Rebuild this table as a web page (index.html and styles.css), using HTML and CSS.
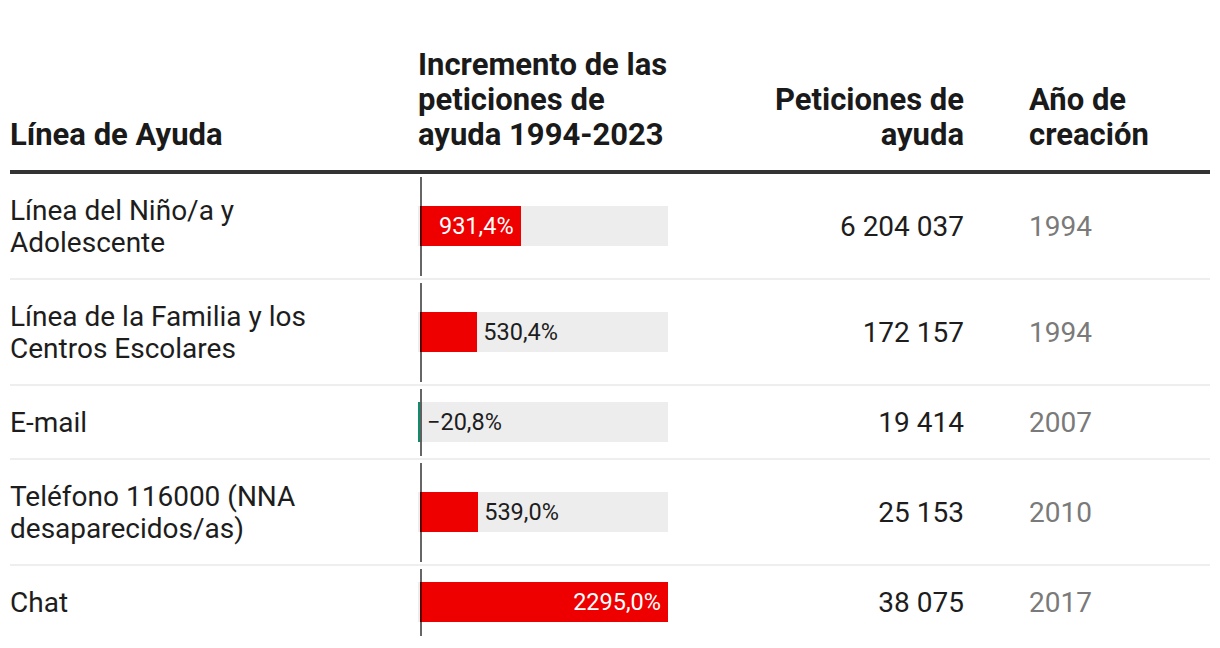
FILE: index.html
```html
<!DOCTYPE html>
<html lang="es">
<head>
<meta charset="utf-8">
<title>Líneas de Ayuda</title>
<link rel="stylesheet" href="styles.css">
</head>
<body>
<div class="table">
  <div class="row head">
    <div class="cell c1">Línea de Ayuda</div>
    <div class="cell c2">Incremento de las<br>peticiones de<br>ayuda 1994-2023</div>
    <div class="cell c3">Peticiones de<br>ayuda</div>
    <div class="cell c4">Año de<br>creación</div>
  </div>
  <div class="row">
    <div class="cell c1"><span class="name">Línea del Niño/a y Adolescente</span></div>
    <div class="cell c2 barcell"><div class="track"><div class="fill pos" style="width:100.6px"><span class="lbl in">931,4%</span></div></div></div>
    <div class="cell c3">6 204 037</div>
    <div class="cell c4">1994</div>
  </div>
  <div class="row">
    <div class="cell c1"><span class="name">Línea de la Familia y los Centros Escolares</span></div>
    <div class="cell c2 barcell"><div class="track"><div class="fill pos" style="width:57.3px"></div><span class="lbl out">530,4%</span></div></div>
    <div class="cell c3">172 157</div>
    <div class="cell c4">1994</div>
  </div>
  <div class="row">
    <div class="cell c1"><span class="name">E-mail</span></div>
    <div class="cell c2 barcell"><div class="track"><div class="fill neg"></div><span class="lbl out neglbl">−20,8%</span></div></div>
    <div class="cell c3">19 414</div>
    <div class="cell c4">2007</div>
  </div>
  <div class="row">
    <div class="cell c1"><span class="name">Teléfono 116000 (NNA desaparecidos/as)</span></div>
    <div class="cell c2 barcell"><div class="track"><div class="fill pos" style="width:58.2px"></div><span class="lbl out">539,0%</span></div></div>
    <div class="cell c3">25 153</div>
    <div class="cell c4">2010</div>
  </div>
  <div class="row">
    <div class="cell c1"><span class="name">Chat</span></div>
    <div class="cell c2 barcell"><div class="track"><div class="fill pos" style="width:248px"><span class="lbl in">2295,0%</span></div></div></div>
    <div class="cell c3">38 075</div>
    <div class="cell c4">2017</div>
  </div>
</div>
</body>
</html>
```
FILE: styles.css
```css
html, body {
  margin: 0;
  padding: 0;
  background: #ffffff;
}
body {
  font-family: Roboto, "Liberation Sans", sans-serif;
  color: #1d1d1d;
}
.table {
  padding: 47px 10px 0 10px;
  width: 1200px;
}
.row {
  display: grid;
  grid-template-columns: 408px 250px 296px 1fr;
  align-items: center;
  border-bottom: 2px solid #eeeeee;
  font-size: 28px;
  line-height: 32px;
}
.row:last-child {
  border-bottom: none;
}
.row.head {
  align-items: end;
  border-bottom: 4px solid #333333;
  font-weight: 700;
  font-size: 31px;
  line-height: 35px;
  color: #1a1a1a;
}
.cell {
  padding-top: 21px;
  padding-bottom: 19px;
}
.head .cell {
  padding-top: 0;
  padding-bottom: 18px;
}
.name {
  display: block;
  max-width: 340px;
}
.c3 {
  text-align: right;
}
.c4 {
  padding-left: 65px;
}
.row:not(.head) .c4 {
  color: #7a7a7a;
}
.barcell {
  position: relative;
  align-self: stretch;
  display: flex;
  align-items: center;
}
.row .barcell {
  padding-top: 0;
  padding-bottom: 0;
}
.barcell::after {
  content: "";
  position: absolute;
  left: 2px;
  top: 3px;
  bottom: 2px;
  width: 2px;
  background: rgba(0, 0, 0, 0.6);
}
.track {
  display: flex;
  align-items: center;
  width: 248px;
  height: 40px;
  padding-left: 2px;
  background: #ededed;
}
.fill {
  height: 40px;
  display: flex;
  align-items: center;
  justify-content: flex-end;
  flex: none;
}
.fill.pos {
  background: #ee0000;
}
.fill.neg {
  width: 2px;
  margin-left: -2px;
  background: #138a6b;
}
.lbl {
  font-size: 23.5px;
  line-height: 40px;
  white-space: nowrap;
}
.lbl.in {
  color: #ffffff;
  padding-right: 7px;
}
.lbl.out {
  color: #1d1d1d;
  margin-left: 6px;
}
.lbl.neglbl {
  margin-left: 7px;
}
```
